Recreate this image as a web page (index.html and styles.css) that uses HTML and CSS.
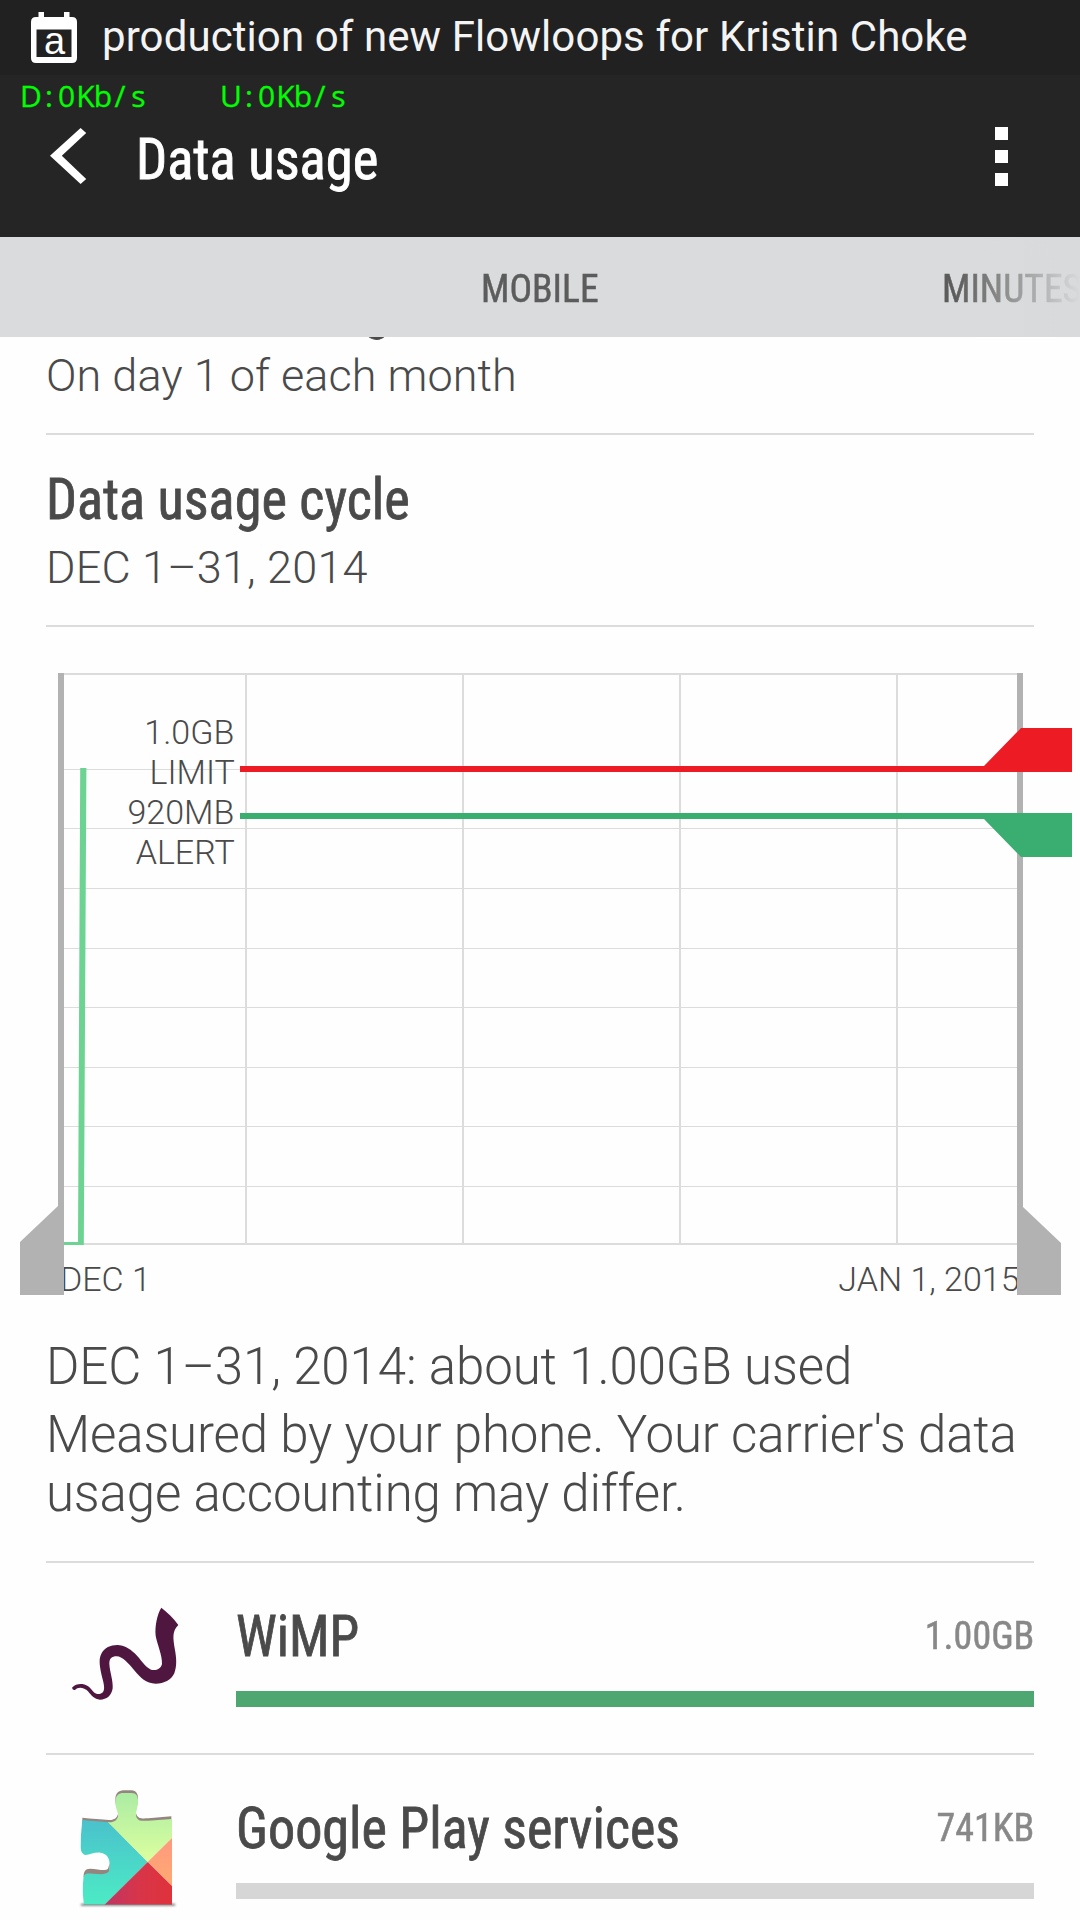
FILE: index.html
```
<!DOCTYPE html>
<html lang="en">
<head>
<meta charset="utf-8">
<title>Data usage</title>
<link rel="stylesheet" href="styles.css">
</head>
<body>
<div class="screen">
  <div class="status">
    <svg class="status-icon" width="46" height="52" viewBox="0 0 46 52">
      <path fill="#fff" fill-rule="evenodd" d="M7.500 0h5.500v5h20v-5h5.500v5H41q5 0 5 5v36q0 5-5 5H5q-5 0-5-5V10q0-5 5-5h2.500zM5.500 17.500v27.500h35V17.500z"/>
      <text class="status-letter" x="23.500" y="41.800" text-anchor="middle">a</text>
    </svg>
    <span class="status-text">production of new Flowloops for Kristin Choke</span>
  </div>

  <header class="header">
    <svg class="speed" width="360" height="40" viewBox="0 75 360 40">
      <text y="107" text-anchor="middle" x="31 49 66.500 85.500 103 120 138.500">D:0Kb/s</text>
      <text y="107" text-anchor="middle" x="231 249 266.500 285.500 303 320 338.500">U:0Kb/s</text>
    </svg>
    <svg class="back" width="37" height="56" viewBox="0 0 37 56">
      <path fill="#fff" d="M30.600 0L36.200 5 11.800 27.700 36.200 51 30.600 56 0 27.700z"/>
    </svg>
    <h1 class="title"><span class="fit title-text">Data usage</span></h1>
    <div class="more"><i></i><i></i><i></i></div>
  </header>

  <nav class="tabs">
    <span class="tab tab-mobile"><span class="fit tab-text">MOBILE</span></span>
    <span class="tab"><span class="fit tab-text">MINUTES</span></span>
    <div class="fade"></div>
  </nav>

  <main class="content">
    <section class="setting setting-first">
      <h2 class="name"><span class="fit name-text">Reset data usage</span></h2>
      <p class="value">On day 1 of each month</p>
    </section>
    <section class="setting">
      <h2 class="name"><span class="fit name-text">Data usage cycle</span></h2>
      <p class="value value-date">DEC 1–31, 2014</p>
    </section>

    <svg class="chart" width="1080" height="683" viewBox="0 627 1080 683">
      <g fill="#dcdcdc">
        <path d="M64 673h953v2H64zM64 1243h953v2H64zM245 673h2v572h-2zM462 673h2v572h-2zM679 673h2v572h-2zM896 673h2v572h-2z"/>
        <path d="M64 769h953v1H64zM64 828h953v1H64zM64 888h953v1H64zM64 948h953v1H64zM64 1007h953v1H64zM64 1067h953v1H64zM64 1126h953v1H64zM64 1186h953v1H64z"/>
      </g>
      <path fill="#6dd393" d="M64 1242H78L80.200 768H86.400L83.800 1245H64z"/>
      <g class="chart-text">
        <text x="234.300" y="744" text-anchor="end">1.0GB</text>
        <text x="234.800" y="784" text-anchor="end">LIMIT</text>
        <text x="234.300" y="824" text-anchor="end">920MB</text>
        <text x="234.800" y="864" text-anchor="end">ALERT</text>
        <text x="60" y="1290.700">DEC 1</text>
        <text x="1019.500" y="1290.700" text-anchor="end">JAN 1, 2015</text>
      </g>
      <g fill="#b2b2b2">
        <path d="M58 673h6v622H20v-53l38-36z"/>
        <path d="M1017 673h6v534l38 36v52h-44z"/>
      </g>
      <path fill="#ed1c24" d="M240 766H984L1021 728H1072V772H240z"/>
      <path fill="#3aae70" d="M240 813H1072V857H1021L984 819H240z"/>
    </svg>

    <section class="summary">
      <p class="summary-total">DEC 1–31, 2014: about 1.00GB used</p>
      <p class="summary-note">Measured by your phone. Your carrier's data<br>usage accounting may differ.</p>
    </section>

    <section class="app">
      <svg class="app-icon" width="190" height="165" viewBox="18 -51 570 495">
        <path fill="#4f173f" d="M364 83C382 97 400 114 415 135C395 155 400 175 404 205C410 235 411 259 403 280C394 300 372 311 347 311C318 310 301 292 284 272C264 249 247 229 230 229C215 229 208 236 208 251C209 275 220 302 218 325C215 347 200 359 180 359C163 358 153 345 144 334C133 323 115 319 105 330Q98 332 96 323C104 314 115 311 127 312C145 315 152 326 161 336C169 344 179 344 187 338C197 330 191 309 186 290C181 266 174 239 184 221C194 203 211 195 232 195C253 196 269 206 284 220C302 237 314 261 333 269C348 273 362 267 366 252C367 224 352 195 347 167C344 138 352 101 364 83z"/>
      </svg>
      <div class="app-body">
        <div class="app-line"><h3 class="app-name"><span class="fit app-text app-text-short">WiMP</span></h3><span class="app-size"><span class="fit size-text">1.00GB</span></span></div>
        <div class="bar"><div class="bar-fill" style="width:100%"></div></div>
      </div>
    </section>
    <section class="app">
      <svg class="app-icon" width="190" height="165" viewBox="18 -15 570 495">
        <defs>
          <linearGradient id="teal" x1="0" y1="0" x2="0" y2="1"><stop offset="0" stop-color="#4ac0cc"/><stop offset="1" stop-color="#4cecc4"/></linearGradient>
          <linearGradient id="lime" x1="0" y1="0" x2="0" y2="1"><stop offset="0" stop-color="#a9eba4"/><stop offset="1" stop-color="#dcff9e"/></linearGradient>
          <linearGradient id="red" x1="0" y1="0" x2="1" y2="0"><stop offset="0" stop-color="#bd3565"/><stop offset=".5" stop-color="#d7354a"/><stop offset="1" stop-color="#e0323a"/></linearGradient>
          <linearGradient id="peach" x1="0" y1="0" x2="0" y2="1"><stop offset="0" stop-color="#ff9880"/><stop offset="1" stop-color="#ffab70"/></linearGradient>
          <filter id="soft" x="-10%" y="-200%" width="120%" height="500%"><feGaussianBlur stdDeviation="3"/></filter>
          <clipPath id="piece"><path d="M127 180C155 183 185 184 207 187C222 188 231 181 234 169C236 157 226 146 226 126C226 106 237 99 250 99H274C289 99 295 109 294 126C293 146 285 158 289 170C294 184 306 183 325 182L396 177V434H132C127 400 128 375 131 349C135 338 145 340 160 341C180 343 198 345 207 334C210 325 209 312 208 304C205 288 196 280 181 278C166 276 150 284 136 285C124 281 121 270 122 252C122 225 125 205 127 180z"/></clipPath>
        </defs>
        <rect x="122" y="431" width="284" height="6" rx="3" fill="#777" filter="url(#soft)"/>
        <path fill="#94857f" d="M127 173C155 176 185 178 207 180C222 181 231 174 234 162C236 150 226 139 226 119C226 99 237 92 250 91H274C289 92 295 102 294 119C293 139 285 151 289 163C294 177 306 176 325 175L394 169V220H127z"/>
        <path fill="#94857f" d="M131 352C130 335 136 326 150 326C175 327 195 335 204 326L209 310V345L180 350z"/>
        <g clip-path="url(#piece)">
          <path fill="url(#teal)" d="M110 170H190L323 306L190 440H110z"/>
          <path fill="url(#lime)" d="M190 90H400V231L323 306L203 186z"/>
          <path fill="url(#peach)" d="M400 230V382L323 306z"/>
          <path fill="url(#red)" d="M190 438L323 306L400 382V438z"/>
          <path stroke="#555" stroke-width="3" opacity=".5" d="M125 434H400"/>
        </g>
      </svg>
      <div class="app-body">
        <div class="app-line"><h3 class="app-name"><span class="fit app-text">Google Play services</span></h3><span class="app-size"><span class="fit size-text">741KB</span></span></div>
        <div class="bar"></div>
      </div>
    </section>
  </main>
</div>
</body>
</html>
```
FILE: styles.css
```
* { box-sizing: border-box; margin: 0; padding: 0; }

body {
  background: #fff;
  color: #4a4a4a;
  font-family: Roboto, sans-serif;
  overflow: hidden;
}

h1, h2, h3 { font-weight: 400; }

.screen {
  width: 1080px;
  height: 1920px;
  display: flex;
  flex-direction: column;
  overflow: hidden;
  background: #fefefe;
}

/* Condensed labels, narrowed slightly from their left edge */
.fit {
  display: inline-block;
  font-family: "Roboto Condensed", Roboto, sans-serif;
  font-stretch: 75%;
  white-space: nowrap;
  transform-origin: 0 50%;
}

.status {
  flex: none;
  height: 75px;
  display: flex;
  align-items: flex-start;
  background: #212121;
  padding-left: 31px;
}
.status-icon { margin-top: 12px; flex: none; }
.status-letter { font: 38px "Liberation Sans", sans-serif; fill: #fff; }
.status-text {
  margin-left: 25px;
  font-size: 42px;
  letter-spacing: 0.090px;
  line-height: 73px;
  color: #f4f4f4;
  white-space: nowrap;
}

.header {
  flex: none;
  position: relative;
  height: 162px;
  display: flex;
  align-items: center;
  background: #252525;
  padding: 0 72px 0 50px;
}
.speed {
  position: absolute;
  left: 0;
  top: 0;
  font-family: "Open Sans", sans-serif;
  font-size: 30px;
  fill: #0f0;
  stroke: #0f0;
  stroke-width: 0.300px;
}
.back { flex: none; }
.title {
  flex: 1;
  margin-left: 49px;
  padding-top: 6px;
  font-size: 58px;
  color: #fff;
}
.title-text { transform: scaleX(0.942); -webkit-text-stroke: 0.900px; }
.more { display: flex; flex-direction: column; gap: 10px; }
.more i { width: 13px; height: 13px; background: #fff; }

.tabs {
  flex: none;
  position: relative;
  height: 100px;
  display: grid;
  grid-template-columns: 481px 461px 1fr;
  overflow: hidden;
  background: #dadbdd;
  color: #5c5c5c;
}
.tab { font-size: 39px; line-height: 104px; }
.tab-mobile { grid-column: 2; }
.tab-text { transform: scaleX(0.965); -webkit-text-stroke: 0.500px; }
.fade {
  position: absolute;
  right: 0;
  top: 0;
  width: 125px;
  height: 100px;
  background: linear-gradient(to right, rgba(217, 218, 219, 0), #d9dadb);
}

.content { flex: 1; overflow: hidden; }

.setting {
  height: 192px;
  margin: 0 46px;
  padding-top: 31px;
  border-bottom: 2px solid #dcdcdc;
}
.setting-first { margin-top: -94px; }
.name { font-size: 57px; line-height: 68px; }
.name-text { transform: scaleX(0.953); -webkit-text-stroke: 0.800px; }
.value { font-size: 45px; font-weight: 300; line-height: 68px; letter-spacing: 0.050px; }
.value-date { letter-spacing: 0.200px; }

.chart { display: block; }
.chart-text { font-size: 34px; font-weight: 300; fill: #4a4a4a; }

.summary {
  height: 253px;
  margin: 0 46px;
  padding-top: 27px;
  border-bottom: 2px solid #dcdcdc;
  font-size: 51px;
  font-weight: 300;
  letter-spacing: -0.150px;
}
.summary-total { line-height: 60px; letter-spacing: -0.110px; }
.summary-note { margin-top: 8px; line-height: 59px; white-space: nowrap; }

.app {
  height: 192px;
  margin: 0 46px;
  display: flex;
  border-bottom: 2px solid #dcdcdc;
}
.app-icon { flex: none; }
.app-body { flex: 1; padding-top: 40px; }
.app-line { display: flex; justify-content: space-between; height: 88px; }
.app-name { font-size: 57px; line-height: 68px; }
.app-text { transform: scaleX(0.950); -webkit-text-stroke: 0.800px; }
.app-text-short { transform: scaleX(0.940); }
.app-size { font-size: 39px; line-height: 66px; color: #888; }
.size-text { transform: scaleX(0.975); transform-origin: 100% 50%; -webkit-text-stroke: 0.500px; }
.bar { height: 16px; background: #d6d6d6; }
.bar-fill { height: 16px; background: #4ea770; }
```
